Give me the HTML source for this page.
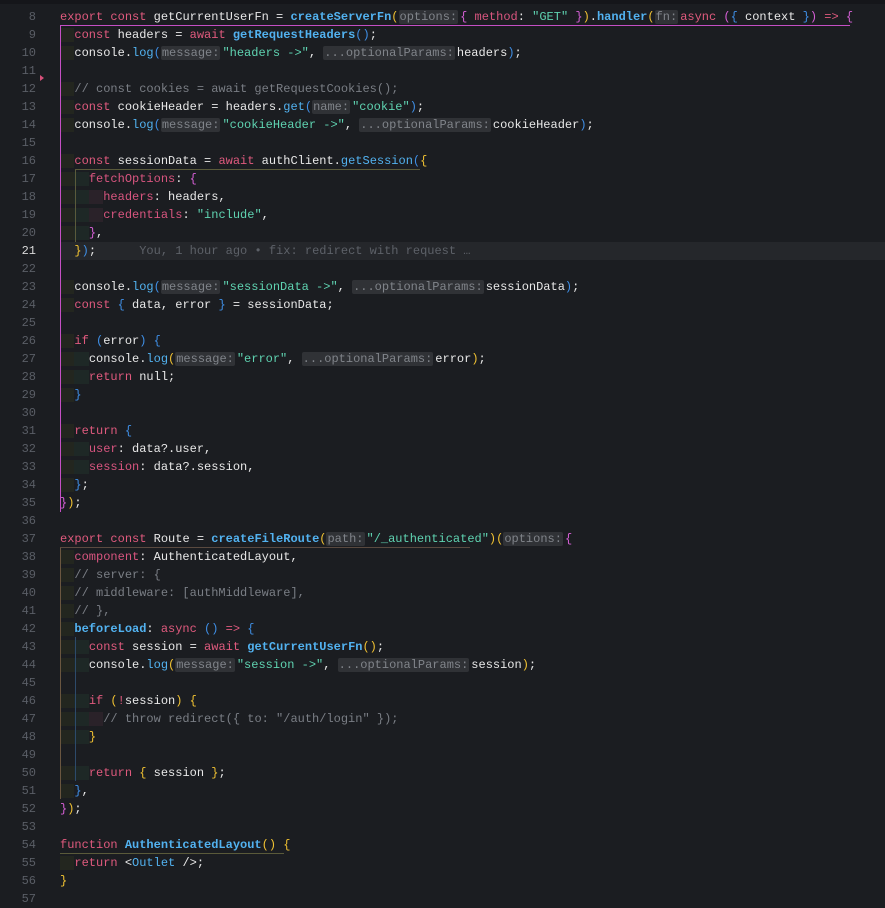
<!DOCTYPE html>
<html><head><meta charset="utf-8"><style>
body{margin:0;background:#1b1d21;width:885px;height:900px;overflow:hidden;position:relative;font-family:"Liberation Mono",monospace;font-size:12px}
.top{position:absolute;left:0;top:0;width:885px;height:4px;background:#15161a}
.ln{position:absolute;left:0;width:36px;text-align:right;color:#5a5e66;line-height:18px;height:18px}
.ln.cur{color:#d8d8d8}
.c{position:absolute;left:60px;white-space:pre;line-height:18px;height:18px;color:#e8e8e8}
.k{color:#e05a7e}.f{color:#52b2f0;font-weight:bold}.s{color:#5fd3b1}.m{color:#7a7e85}.p{color:#d8557f}
.y{color:#f1c232}.pk{color:#d65fd6}.b{color:#3f8fe6}.o{color:#52b2f0}
.h{background:#303236;color:#80848a;padding:0 1px;margin-right:2px;border-radius:2px}
.i1{background:#23261f}.i2{background:#1e2826}.i3{background:#2a2229}
.hl{position:absolute;left:60px;width:825px;height:18px;background:#25272b}
.bl{color:#5d6168}
.g{position:absolute;z-index:3}
</style></head><body>
<div class="top"></div>
<div class="hl" style="top:242px"></div>
<div id="L"></div>
<div class="g" style="left:60px;top:26px;width:1px;height:486px;background:#c44fc4"></div>
<div class="g" style="left:60px;top:25px;width:790px;height:1px;background:#c44fc4"></div>
<div class="g" style="left:40px;top:75px;width:0;height:0;border-left:4px solid #d6507a;border-top:3px solid transparent;border-bottom:3px solid transparent"></div>
<div class="g" style="left:75px;top:169px;width:345px;height:1px;background:#5a5a3a"></div>
<div class="g" style="left:75px;top:170px;width:1px;height:72px;background:#5a5a3a"></div>
<div class="g" style="left:60px;top:547px;width:1px;height:252px;background:#6a5640"></div>
<div class="g" style="left:75px;top:637px;width:1px;height:144px;background:#2d4a6a"></div>
<div class="g" style="left:60px;top:853px;width:224px;height:1px;background:#5a5a3a"></div>
<div class="g" style="left:60px;top:547px;width:410px;height:1px;background:#5a4a40"></div>
<script>
const L=[
[8,'<span class="k">export</span> <span class="k">const</span> getCurrentUserFn = <span class="f">createServerFn</span><span class="y">(</span><span class="h">options:</span><span class="pk">{</span> <span class="p">method</span>: <span class="s">"GET"</span> <span class="pk">}</span><span class="y">)</span>.<span class="f">handler</span><span class="y">(</span><span class="h">fn:</span><span class="k">async</span> <span class="pk">(</span><span class="b">{</span> context <span class="b">}</span><span class="pk">)</span> <span class="k">=&gt;</span> <span class="pk">{</span>'],
[9,'<span class="i1">  </span><span class="k">const</span> headers = <span class="k">await</span> <span class="f">getRequestHeaders</span><span class="b">()</span>;'],
[10,'<span class="i1">  </span>console.<span class="o">log</span><span class="b">(</span><span class="h">message:</span><span class="s">"headers -&gt;"</span>, <span class="h">...optionalParams:</span>headers<span class="b">)</span>;'],
[11,''],
[12,'<span class="i1">  </span><span class="m">// const cookies = await getRequestCookies();</span>'],
[13,'<span class="i1">  </span><span class="k">const</span> cookieHeader = headers.<span class="o">get</span><span class="b">(</span><span class="h">name:</span><span class="s">"cookie"</span><span class="b">)</span>;'],
[14,'<span class="i1">  </span>console.<span class="o">log</span><span class="b">(</span><span class="h">message:</span><span class="s">"cookieHeader -&gt;"</span>, <span class="h">...optionalParams:</span>cookieHeader<span class="b">)</span>;'],
[15,''],
[16,'<span class="i1">  </span><span class="k">const</span> sessionData = <span class="k">await</span> authClient.<span class="o">getSession</span><span class="b">(</span><span class="y">{</span>'],
[17,'<span class="i1">  </span><span class="i2">  </span><span class="p">fetchOptions</span>: <span class="pk">{</span>'],
[18,'<span class="i1">  </span><span class="i2">  </span><span class="i3">  </span><span class="p">headers</span>: headers,'],
[19,'<span class="i1">  </span><span class="i2">  </span><span class="i3">  </span><span class="p">credentials</span>: <span class="s">"include"</span>,'],
[20,'<span class="i1">  </span><span class="i2">  </span><span class="pk">}</span>,'],
[21,'  <span class="y">}</span><span class="b">)</span>;      <span class="bl">You, 1 hour ago • fix: redirect with request …</span>'],
[22,''],
[23,'<span class="i1">  </span>console.<span class="o">log</span><span class="b">(</span><span class="h">message:</span><span class="s">"sessionData -&gt;"</span>, <span class="h">...optionalParams:</span>sessionData<span class="b">)</span>;'],
[24,'<span class="i1">  </span><span class="k">const</span> <span class="b">{</span> data, error <span class="b">}</span> = sessionData;'],
[25,''],
[26,'<span class="i1">  </span><span class="k">if</span> <span class="b">(</span>error<span class="b">)</span> <span class="b">{</span>'],
[27,'<span class="i1">  </span><span class="i2">  </span>console.<span class="o">log</span><span class="y">(</span><span class="h">message:</span><span class="s">"error"</span>, <span class="h">...optionalParams:</span>error<span class="y">)</span>;'],
[28,'<span class="i1">  </span><span class="i2">  </span><span class="k">return</span> null;'],
[29,'<span class="i1">  </span><span class="b">}</span>'],
[30,''],
[31,'<span class="i1">  </span><span class="k">return</span> <span class="b">{</span>'],
[32,'<span class="i1">  </span><span class="i2">  </span><span class="p">user</span>: data?.user,'],
[33,'<span class="i1">  </span><span class="i2">  </span><span class="p">session</span>: data?.session,'],
[34,'<span class="i1">  </span><span class="b">}</span>;'],
[35,'<span class="pk">}</span><span class="y">)</span>;'],
[36,''],
[37,'<span class="k">export</span> <span class="k">const</span> Route = <span class="f">createFileRoute</span><span class="y">(</span><span class="h">path:</span><span class="s">"/_authenticated"</span><span class="y">)(</span><span class="h">options:</span><span class="pk">{</span>'],
[38,'<span class="i1">  </span><span class="p">component</span>: AuthenticatedLayout,'],
[39,'<span class="i1">  </span><span class="m">// server: {</span>'],
[40,'<span class="i1">  </span><span class="m">// middleware: [authMiddleware],</span>'],
[41,'<span class="i1">  </span><span class="m">// },</span>'],
[42,'<span class="i1">  </span><span class="f">beforeLoad</span>: <span class="k">async</span> <span class="b">()</span> <span class="k">=&gt;</span> <span class="b">{</span>'],
[43,'<span class="i1">  </span><span class="i2">  </span><span class="k">const</span> session = <span class="k">await</span> <span class="f">getCurrentUserFn</span><span class="y">()</span>;'],
[44,'<span class="i1">  </span><span class="i2">  </span>console.<span class="o">log</span><span class="y">(</span><span class="h">message:</span><span class="s">"session -&gt;"</span>, <span class="h">...optionalParams:</span>session<span class="y">)</span>;'],
[45,''],
[46,'<span class="i1">  </span><span class="i2">  </span><span class="k">if</span> <span class="y">(</span><span class="k">!</span>session<span class="y">)</span> <span class="y">{</span>'],
[47,'<span class="i1">  </span><span class="i2">  </span><span class="i3">  </span><span class="m">// throw redirect({ to: "/auth/login" });</span>'],
[48,'<span class="i1">  </span><span class="i2">  </span><span class="y">}</span>'],
[49,''],
[50,'<span class="i1">  </span><span class="i2">  </span><span class="k">return</span> <span class="y">{</span> session <span class="y">}</span>;'],
[51,'<span class="i1">  </span><span class="b">}</span>,'],
[52,'<span class="pk">}</span><span class="y">)</span>;'],
[53,''],
[54,'<span class="k">function</span> <span class="f">AuthenticatedLayout</span><span class="y">()</span> <span class="y">{</span>'],
[55,'<span class="i1">  </span><span class="k">return</span> &lt;<span class="o">Outlet</span> /&gt;;'],
[56,'<span class="y">}</span>'],
[57,'']];
let h='';
for(const [n,c] of L){const t=8+(n-8)*18;
h+=`<div class="ln${n==21?' cur':''}" style="top:${t}px">${n}</div><div class="c" style="top:${t}px">${c}</div>`;}
document.getElementById('L').innerHTML=h;
</script>
</body></html>
